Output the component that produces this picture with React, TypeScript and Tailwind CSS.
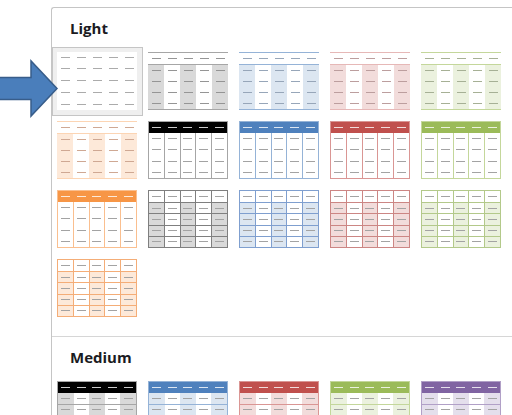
import React from "react";

type Kind = "none" | "band" | "head" | "grid" | "medium";

interface Palette {
  line: string; // border colour
  grid: string; // darker border colour for the grid styles
  band: string; // stripe fill
  head: string; // header fill
  dash: string; // placeholder dash colour
}

interface Swatch extends Palette {
  kind: Kind;
}

const gray: Palette = {
  line: "border-[#a6a6a6]",
  grid: "border-[#7f7f7f]",
  band: "bg-[#d9d9d9]",
  head: "bg-black",
  dash: "bg-[#959595]",
};
const blue: Palette = {
  line: "border-[#95b3d7]",
  grid: "border-[#7f9fcf]",
  band: "bg-[#dce6f1]",
  head: "bg-[#4f81bd]",
  dash: "bg-[#97a6b9]",
};
const red: Palette = {
  line: "border-[#da9694]",
  grid: "border-[#cc8684]",
  band: "bg-[#f2dcdb]",
  head: "bg-[#c0504d]",
  dash: "bg-[#bc9e9e]",
};
const green: Palette = {
  line: "border-[#c4d79b]",
  grid: "border-[#b3c98a]",
  band: "bg-[#ebf1de]",
  head: "bg-[#9bbb59]",
  dash: "bg-[#a6b095]",
};
const purple: Palette = {
  line: "border-[#b1a0c7]",
  grid: "border-[#a08dba]",
  band: "bg-[#e4dfec]",
  head: "bg-[#8064a2]",
  dash: "bg-[#a69fb2]",
};
const aqua: Palette = {
  line: "border-[#92cddc]",
  grid: "border-[#7fbfd0]",
  band: "bg-[#daeef3]",
  head: "bg-[#4bacc6]",
  dash: "bg-[#99b3ba]",
};
const orange: Palette = {
  line: "border-[#fabf8f]",
  grid: "border-[#f4ad77]",
  band: "bg-[#fde9d9]",
  head: "bg-[#f79646]",
  dash: "bg-[#cfa893]",
};

// header / grid styles keep neutral gray placeholder dashes
const neutral = "bg-[#a3a3a3]";

const mk = (kind: Kind, p: Palette): Swatch => ({ kind, ...p });
const mkn = (kind: Kind, p: Palette): Swatch => ({ kind, ...p, dash: neutral });

const light: Swatch[] = [
  { kind: "none", ...gray, dash: "bg-[#ababab]" },
  mk("band", gray),
  mk("band", blue),
  mk("band", { ...red, line: "border-[#e6b8b7]" }),
  mk("band", green),
  mk("band", purple),
  mk("band", aqua),
  mk("band", { ...orange, line: "border-[#fcd5b4]" }),
  mkn("head", gray),
  mkn("head", blue),
  mkn("head", red),
  mkn("head", green),
  mkn("head", purple),
  mkn("head", aqua),
  mkn("head", orange),
  mkn("grid", gray),
  mkn("grid", blue),
  mkn("grid", red),
  mkn("grid", green),
  mkn("grid", purple),
  mkn("grid", aqua),
  mkn("grid", orange),
];

const medium: Swatch[] = [
  mkn("medium", gray),
  mkn("medium", blue),
  mkn("medium", red),
  mkn("medium", green),
  mkn("medium", purple),
  mkn("medium", aqua),
  mkn("medium", orange),
];

function Table({ s }: { s: Swatch }) {
  const colored = s.kind === "head" || s.kind === "medium";
  const edge = s.kind === "grid" ? s.grid : s.line;
  const outer =
    s.kind === "none" ? "" : s.kind === "band" ? `border-y ${edge}` : `border ${edge}`;

  return (
    <div className={`w-[80px] h-[58px] flex flex-col bg-white ${outer}`}>
      {[0, 1, 2, 3, 4].map((r) => {
        const header = r === 0;
        let rowCls = header ? "h-[11px] shrink-0" : "flex-1";
        if (header && colored) rowCls += ` ${s.head}`;
        // line under the header
        if (r === 1 && (s.kind === "band" || s.kind === "grid")) rowCls += ` border-t ${edge}`;
        // lines between body rows
        if (r > 1 && (s.kind === "grid" || s.kind === "medium")) rowCls += ` border-t ${edge}`;

        return (
          <div key={r} className={`flex ${rowCls}`}>
            {[0, 1, 2, 3, 4].map((c) => {
              let cell = "flex-1 flex items-center justify-center";
              const striped = !header && c % 2 === 0 && s.kind !== "none" && s.kind !== "head";
              if (striped) cell += ` ${s.band}`;
              const vline =
                c > 0 && ((s.kind === "head" && !header) || s.kind === "grid");
              if (vline) cell += ` border-l ${edge}`;
              const dash = header && colored ? "bg-white/80" : s.dash;
              return (
                <div key={c} className={cell}>
                  <span className={`block w-[9px] h-px ${dash}`} />
                </div>
              );
            })}
          </div>
        );
      })}
    </div>
  );
}

function Tile({ s, selected }: { s: Swatch; selected?: boolean }) {
  return (
    <div
      className={
        selected
          ? "w-[91px] h-[69px] p-[4px] border border-[#c5c5c5] bg-[#efefef]"
          : "w-[91px] h-[69px] p-[5px]"
      }
    >
      <Table s={s} />
    </div>
  );
}

function Heading({ children }: { children: React.ReactNode }) {
  return (
    <div className="h-[39px] pl-[18px] pt-[10px] text-[15px] leading-[20px] font-bold text-[#1b1b22]">
      {children}
    </div>
  );
}

export default function App() {
  return (
    <div className="relative w-[512px] h-[415px] overflow-hidden bg-white font-['Open_Sans',sans-serif]">
      {/* callout arrow pointing at the selected style */}
      <svg
        className="absolute left-0 top-[58px]"
        width="62"
        height="62"
        viewBox="0 0 62 62"
      >
        <polygon
          points="-3,19.5 31,19.5 31,3 57,30.5 31,58 31,41.5 -3,41.5"
          fill="#4a7ebb"
          stroke="#385d8a"
          strokeWidth="1.5"
          strokeLinejoin="miter"
        />
      </svg>

      <div className="ml-[51px] mt-[7px] w-[700px] border-l border-t border-[#c5c5c5] rounded-tl-[3px]">
        <Heading>Light</Heading>
        <div className="grid grid-cols-[repeat(7,91px)]">
          {light.map((s, i) => (
            <Tile key={i} s={s} selected={i === 0} />
          ))}
        </div>

        <div className="mt-[13px] border-t border-[#d6d6d6]" />

        <Heading>Medium</Heading>
        <div className="grid grid-cols-[repeat(7,91px)]">
          {medium.map((s, i) => (
            <Tile key={i} s={s} />
          ))}
        </div>
      </div>
    </div>
  );
}
